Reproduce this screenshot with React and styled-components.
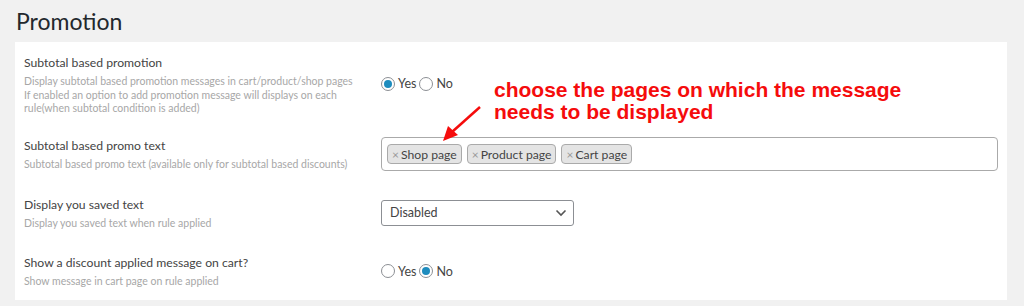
import React from "react";
import styled, { createGlobalStyle } from "styled-components";

const Global = createGlobalStyle`
  html, body { margin: 0; padding: 0; background: #f1f1f1; }
  body { font-family: Lato, "Noto Sans", sans-serif; color: #3c434a; }
  * { box-sizing: border-box; }
`;

const Page = styled.div`
  position: relative;
  width: 1024px;
  height: 306px;
  padding: 0 17px 0 15px;
  overflow: hidden;
`;

const Heading = styled.h1`
  margin: 0;
  padding: 7px 0 0 1px;
  height: 42px;
  font-size: 23px;
  font-weight: 400;
  color: #23282d;
  line-height: 29px;
`;

const Panel = styled.div`
  background: #fff;
  padding: 12px 9px 11px 9px;
  display: grid;
  grid-template-columns: 357px 1fr;
  row-gap: 24px;
  align-items: center;
`;

const Label = styled.div`
  display: flex;
  flex-direction: column;
  margin-bottom: ${(p) => (p.$multi ? "-2.5px" : "0")};
`;

const Title = styled.div`
  font-size: 12.2px;
  line-height: 18px;
  color: #444;
`;

const Desc = styled.div`
  margin-top: 3px;
  font-size: 10.5px;
  line-height: 13.5px;
  color: #a7a7a7;
  white-space: pre-line;
`;

const Control = styled.div`
  display: flex;
  align-items: center;
`;

const RadioGroup = styled.div`
  display: flex;
  align-items: center;
  font-size: 12.5px;
  color: #444;
`;

const RadioItem = styled.label`
  display: flex;
  align-items: center;
  margin-right: 3px;
`;

const RadioCircle = styled.span`
  width: 14px;
  height: 14px;
  border-radius: 50%;
  border: 1px solid #8c8f94;
  display: inline-flex;
  align-items: center;
  justify-content: center;
  margin-right: 3px;
  background: #fff;
  &::after {
    content: "";
    width: 8px;
    height: 8px;
    border-radius: 50%;
    background: ${(p) => (p.$checked ? "#1e8cbe" : "transparent")};
  }
`;

const TagBox = styled.div`
  width: 100%;
  height: 34px;
  border: 1px solid #aaa;
  border-radius: 4px;
  display: flex;
  align-items: center;
  gap: 5px;
  padding: 0 5px;
`;

const Tag = styled.span`
  height: 20px;
  display: inline-flex;
  align-items: center;
  background: #e4e4e4;
  border: 1px solid #aaa;
  border-radius: 4px;
  padding: 0 4px 0 4px;
  font-size: 12.2px;
  color: #444;
`;

const TagX = styled.span`
  color: #999;
  font-size: 12px;
  margin-right: 2px;
`;

const Select = styled.div`
  width: 193px;
  height: 26px;
  border: 1px solid #8c8f94;
  border-radius: 3px;
  display: flex;
  align-items: center;
  justify-content: space-between;
  padding: 0 6px 0 8px;
  font-size: 12.5px;
  color: #444;
`;

const Note = styled.div`
  position: absolute;
  left: 494px;
  top: 79px;
  font-family: "Liberation Sans", Arial, sans-serif;
  font-weight: 700;
  font-size: 21px;
  line-height: 22px;
  color: #f50c0c;
`;

const Arrow = styled.svg`
  position: absolute;
  left: 436px;
  top: 104px;
`;

const Radio = ({ checked, children }) => (
  <RadioItem>
    <RadioCircle $checked={checked} />
    {children}
  </RadioItem>
);

export default function App() {
  return (
    <Page>
      <Global />
      <Heading>Promotion</Heading>
      <Panel>
        <Label $multi>
          <Title>Subtotal based promotion</Title>
          <Desc>
            {"Display subtotal based promotion messages in cart/product/shop pages\nIf enabled an option to add promotion message will displays on each\nrule(when subtotal condition is added)"}
          </Desc>
        </Label>
        <Control>
          <RadioGroup>
            <Radio checked>Yes</Radio>
            <Radio>No</Radio>
          </RadioGroup>
        </Control>

        <Label>
          <Title>Subtotal based promo text</Title>
          <Desc>Subtotal based promo text (available only for subtotal based discounts)</Desc>
        </Label>
        <Control>
          <TagBox>
            <Tag><TagX>×</TagX>Shop page</Tag>
            <Tag><TagX>×</TagX>Product page</Tag>
            <Tag><TagX>×</TagX>Cart page</Tag>
          </TagBox>
        </Control>

        <Label>
          <Title>Display you saved text</Title>
          <Desc>Display you saved text when rule applied</Desc>
        </Label>
        <Control>
          <Select>
            <span>Disabled</span>
            <svg width="12" height="8" viewBox="0 0 12 8">
              <path d="M1.5 1.5 L6 6 L10.5 1.5" fill="none" stroke="#555" strokeWidth="1.6" />
            </svg>
          </Select>
        </Control>

        <Label>
          <Title>Show a discount applied message on cart?</Title>
          <Desc>Show message in cart page on rule applied</Desc>
        </Label>
        <Control>
          <RadioGroup>
            <Radio>Yes</Radio>
            <Radio checked>No</Radio>
          </RadioGroup>
        </Control>
      </Panel>
      <Note>
        choose the pages on which the message
        <br />
        needs to be displayed
      </Note>
      <Arrow width="50" height="42" viewBox="0 0 50 42">
        <line x1="44" y1="3" x2="16" y2="28" stroke="#f50c0c" strokeWidth="2.5" />
        <polygon points="7,37 12,22 22,31" fill="#f50c0c" />
      </Arrow>
    </Page>
  );
}
